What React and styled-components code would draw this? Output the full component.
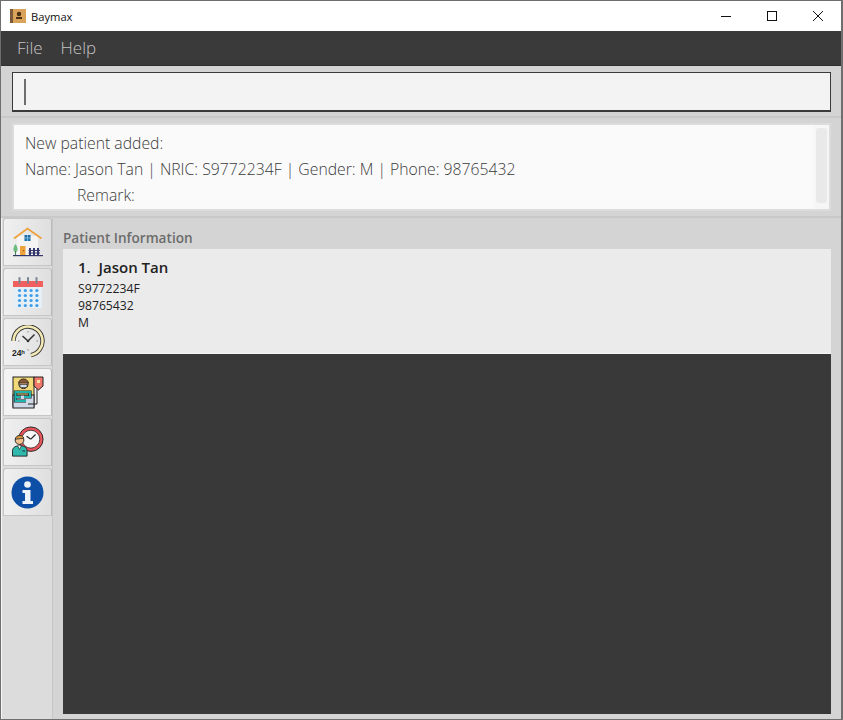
import React from 'react';
import styled, { createGlobalStyle } from 'styled-components';

const GlobalStyle = createGlobalStyle`
    html, body {
        margin: 0;
        padding: 0;
        height: 100%;
        overflow: hidden;
    }
    #root {
        height: 100%;
    }
`;

function BaymaxLogo () {
    return (
        <svg width="16" height="16" viewBox="0 0 16 16">
            <rect x="0" y="1" width="4" height="14" fill="#7a5a3a" />
            <rect x="3" y="1" width="13" height="14" fill="#d9a35c" />
            <circle cx="9" cy="6" r="2.2" fill="#4a2f14" />
            <rect x="6" y="9" width="6" height="2" fill="#4a2f14" />
        </svg>
    );
}

function HomeIcon () {
    return (
        <svg width="30" height="30" viewBox="0 0 30 30">
            <rect x="4" y="9" width="21" height="19" fill="#f4f4f4" />
            <path d="M1 11.5 L14.5 1.5 L28.5 11.5" fill="none" stroke="#eda23c" strokeWidth="1.8" />
            <rect x="11.5" y="8" width="6" height="6" fill="#1f6fa8" />
            <path d="M14.5 8 V14 M11.5 11 H17.5" stroke="#8fc5e8" strokeWidth="0.8" />
            <rect x="7" y="19" width="5.5" height="9" fill="#eda23c" />
            <rect x="10" y="23" width="1.2" height="1.2" fill="#9a5d14" />
            <path d="M2.5 17 C0 20 -0.5 25 2.5 25 C5.5 25 5 20 2.5 17 Z" fill="#6dbb7c" />
            <rect x="2" y="24" width="1" height="4" fill="#4b7f58" />
            <path d="M17 21 V28 M21 21 V28 M25 21 V28" stroke="#33376b" strokeWidth="2" />
            <path d="M15.5 23.5 H27 M15.5 26 H27" stroke="#33376b" strokeWidth="1" />
            <rect x="0" y="28" width="30" height="1.2" fill="#33376b" />
        </svg>
    );
}

function CalendarIcon () {
    const dots = [];
    for (let row = 0; row < 4; row++) {
        for (let col = 0; col < 4; col++) {
            dots.push(<circle key={`${row}-${col}`} cx={6.5 + col * 5.8} cy={13.5 + row * 5} r="1.6" fill="#3d9de8" />);
        }
    }
    return (
        <svg width="30" height="31" viewBox="0 0 30 31">
            <rect x="1" y="9" width="28" height="22" fill="#e6eff6" />
            <rect x="0" y="4" width="30" height="6" fill="#f0605f" />
            <path d="M6.5 1 V6 M15 1 V6 M23.5 1 V6" stroke="#7d8590" strokeWidth="2" strokeLinecap="round" />
            {dots}
        </svg>
    );
}

function ClockIcon () {
    const arc = 'M2.5 16 A14.5 14.5 0 1 1 20 30.2';
    return (
        <svg width="34" height="34" viewBox="0 0 34 34">
            <path d={arc} fill="none" stroke="#333333" strokeWidth="4.4" />
            <path d={arc} fill="none" stroke="#f3e9b5" strokeWidth="2.6" />
            <path d="M17 16 L11.5 11 M17 16 L23.5 9.5" stroke="#333" strokeWidth="1.5" fill="none" />
            <circle cx="17" cy="16" r="1.3" fill="#333" />
            <path d="M17 6 V7.5 M27 16 H25.5 M17 25.5 V24 M7 16 H8.5" stroke="#8a8a8a" strokeWidth="1" />
            <text x="1" y="31" fontFamily="'Liberation Sans', sans-serif" fontSize="8.5" fontWeight="700" fill="#222">24ʰ</text>
        </svg>
    );
}

function BedIcon () {
    return (
        <svg width="33" height="33" viewBox="0 0 33 33">
            <rect x="2" y="1" width="21" height="30" fill="#f2d977" stroke="#222" strokeWidth="1" />
            <rect x="2" y="19" width="21" height="13" fill="#cfd8e6" stroke="#222" strokeWidth="1" />
            <circle cx="12.5" cy="8" r="4.6" fill="#e9b48e" stroke="#222" strokeWidth="1" />
            <path d="M7.5 7 C8.5 1.5 16.5 1.5 17.5 7 Z" fill="#8a5a34" stroke="#222" strokeWidth="0.7" />
            <rect x="9" y="8.5" width="7" height="3" fill="#cfe0e6" stroke="#222" strokeWidth="0.6" />
            <path d="M4.5 21 V16 H19 V21 H13 M4.5 21 H10 M4.5 21 V25 H15" fill="none" stroke="#222" strokeWidth="3.2" />
            <path d="M4.5 21 V16 H19 V21 H13 M4.5 21 H10 M4.5 21 V25 H15" fill="none" stroke="#1fb3ad" strokeWidth="2" />
            <path d="M17 28 H26 V13" fill="none" stroke="#222" strokeWidth="1" />
            <path d="M23 1 H32 V10 L27.5 14 L23 10 Z" fill="#f0796b" stroke="#222" strokeWidth="1" />
            <rect x="26" y="4" width="3" height="3" fill="#f8e2a0" />
        </svg>
    );
}

function DoctorClockIcon () {
    return (
        <svg width="32" height="32" viewBox="0 0 34 34">
            <circle cx="20" cy="14" r="13" fill="#e8545b" stroke="#222" strokeWidth="1" />
            <circle cx="20" cy="14" r="9.5" fill="#f7f7f7" stroke="#222" strokeWidth="0.8" />
            <path d="M20 14 L15.5 11 M20 14 L25 9" stroke="#222" strokeWidth="1.3" />
            <circle cx="8" cy="15" r="4.6" fill="#f2c08f" stroke="#222" strokeWidth="1" />
            <path d="M3.5 14 C4 9 12 9 12.5 13 Z" fill="#d69b3c" stroke="#222" strokeWidth="0.8" />
            <path d="M0.5 32 V26 C1 22 5 21 8 21 C12 21 15.5 22 16 26 V32 Z" fill="#2fb9ae" stroke="#222" strokeWidth="1" />
            <path d="M6 21 L8 25 L10 21" fill="#f6f6f6" stroke="#222" strokeWidth="0.7" />
            <rect x="11" y="26" width="3" height="1" fill="#222" />
        </svg>
    );
}

function InfoIcon () {
    return (
        <svg width="33" height="33" viewBox="0 0 33 33">
            <circle cx="16.5" cy="16.5" r="16" fill="#0d4ea6" />
            <circle cx="16.5" cy="8.5" r="3.3" fill="#eef3fa" />
            <path d="M11.5 14 H19.5 V25 H22 V28 H11.5 V25 H14 V17 H11.5 Z" fill="#eef3fa" />
        </svg>
    );
}

const tabs = [
    { id: 'home', icon: <HomeIcon /> },
    { id: 'calendar', icon: <CalendarIcon /> },
    { id: 'clock', icon: <ClockIcon /> },
    { id: 'patient', icon: <BedIcon />, selected: true },
    { id: 'doctor', icon: <DoctorClockIcon /> },
    { id: 'info', icon: <InfoIcon /> },
];

function App () {
    return (
        <Window>
            <GlobalStyle />
            <TitleBar>
                <BaymaxLogo />
                <WindowTitle>Baymax</WindowTitle>
                <WindowControls>
                    <ControlButton>
                        <svg width="12" height="12" viewBox="0 0 12 12"><path d="M1 6.5 H11" stroke="#111" /></svg>
                    </ControlButton>
                    <ControlButton>
                        <svg width="12" height="12" viewBox="0 0 12 12"><rect x="1.5" y="1.5" width="9" height="9" fill="none" stroke="#111" /></svg>
                    </ControlButton>
                    <ControlButton>
                        <svg width="12" height="12" viewBox="0 0 12 12"><path d="M1 1 L11 11 M11 1 L1 11" stroke="#111" /></svg>
                    </ControlButton>
                </WindowControls>
            </TitleBar>
            <MenuBar>
                <MenuItem>File</MenuItem>
                <MenuItem>Help</MenuItem>
            </MenuBar>
            <CommandPane>
                <CommandBox>
                    <Caret />
                </CommandBox>
            </CommandPane>
            <ResultPane>
                <ResultBox>
                    <ResultText>
                        <ResultLine>New patient added:</ResultLine>
                        <ResultLine>Name: Jason Tan | NRIC: S9772234F | Gender: M | Phone: 98765432</ResultLine>
                        <ResultLine $indent>Remark:</ResultLine>
                    </ResultText>
                    <ScrollTrack>
                        <ScrollThumb />
                    </ScrollTrack>
                </ResultBox>
            </ResultPane>
            <MainArea>
                <TabColumn>
                    {tabs.map(tab => (
                        <Tab key={tab.id} $selected={tab.selected}>{tab.icon}</Tab>
                    ))}
                </TabColumn>
                <ContentPane>
                    <SectionTitle>Patient Information</SectionTitle>
                    <PatientList>
                        <PatientCard>
                            <PatientName>1.&nbsp; Jason Tan</PatientName>
                            <PatientField>S9772234F</PatientField>
                            <PatientField>98765432</PatientField>
                            <PatientField>M</PatientField>
                        </PatientCard>
                    </PatientList>
                </ContentPane>
            </MainArea>
        </Window>
    );
}

const uiFont = `'Open Sans', 'Noto Sans', sans-serif`;

const Window = styled.div`
    width: 843px;
    height: 720px;
    box-sizing: border-box;
    border: 1px solid #6f6f6f;
    border-right-width: 2px;
    display: flex;
    flex-direction: column;
    background: #d4d4d4;
    font-family: ${uiFont};
    overflow: hidden;
`;

const TitleBar = styled.div`
    height: 30px;
    flex: none;
    background: #ffffff;
    display: flex;
    align-items: center;
    padding-left: 9px;
`;

const WindowTitle = styled.span`
    margin-left: 5px;
    font-size: 11.2px;
    color: #111111;
`;

const WindowControls = styled.div`
    margin-left: auto;
    display: flex;
`;

const ControlButton = styled.div`
    width: 46px;
    height: 30px;
    display: flex;
    align-items: center;
    justify-content: center;
`;

const MenuBar = styled.div`
    height: 35px;
    flex: none;
    box-sizing: border-box;
    background: #3a3a3a;
    border-bottom: 1px solid #2f2f2f;
    display: flex;
    align-items: center;
    padding: 0 0 2px 16px;
    gap: 18px;
`;

const MenuItem = styled.span`
    font-size: 17px;
    font-weight: 300;
    color: #c4c4c4;
`;

const CommandPane = styled.div`
    height: 52px;
    flex: none;
    box-sizing: border-box;
    padding: 6px 10px 4px 11px;
    border-bottom: 2px solid #c9c9c9;
`;

const CommandBox = styled.div`
    height: 40px;
    box-sizing: border-box;
    background: #f3f3f3;
    border: 1px solid #3a3a3a;
    border-bottom-width: 2px;
    display: flex;
    align-items: center;
    padding-left: 11px;
`;

const Caret = styled.div`
    width: 2px;
    height: 26px;
    background: #6e6e6e;
`;

const ResultPane = styled.div`
    height: 100px;
    flex: none;
    box-sizing: border-box;
    padding: 5px 10px 5px 11px;
    border-bottom: 2px solid #c9c9c9;
`;

const ResultBox = styled.div`
    height: 88px;
    box-sizing: border-box;
    background: #fafafa;
    border: 2px solid #dcdcdc;
    display: flex;
`;

const ResultText = styled.div`
    flex: 1;
    padding: 5px 0 0 11px;
`;

const ResultLine = styled.div`
    height: 26px;
    line-height: 26px;
    font-size: 15.75px;
    font-weight: 300;
    color: #3a3a3a;
    white-space: nowrap;
    padding-left: ${props => props.$indent ? '52px' : '0'};
`;

const ScrollTrack = styled.div`
    width: 16px;
    background: #f6f6f6;
    padding: 3px 2px 6px 3px;
    box-sizing: border-box;
`;

const ScrollThumb = styled.div`
    height: 100%;
    border-radius: 3px;
    background: #e9e9e9;
`;

const MainArea = styled.div`
    flex: 1;
    display: flex;
    min-height: 0;
`;

const TabColumn = styled.div`
    width: 52px;
    flex: none;
    box-sizing: border-box;
    padding-left: 1px;
    background: #dcdcdc;
    border-left: 1px solid #f5f5f5;
    border-right: 1px solid #c6c6c6;
    display: flex;
    flex-direction: column;
`;

const Tab = styled.div`
    height: 48px;
    width: 49px;
    flex: none;
    box-sizing: border-box;
    margin-bottom: 2px;
    display: flex;
    align-items: center;
    justify-content: center;
    border: 1px solid #c6c6c6;
    border-right-color: #b9b9b9;
    border-radius: 3px 3px 0 0;
    background: ${props => props.$selected ? '#f3f3f3' : 'linear-gradient(90deg, #f0f0f0, #dfdfdf)'};
`;

const ContentPane = styled.div`
    flex: 1;
    min-width: 0;
    display: flex;
    flex-direction: column;
    padding: 12px 10px 5px 10px;
`;

const SectionTitle = styled.div`
    height: 19px;
    line-height: 16px;
    font-size: 13.6px;
    font-weight: 600;
    color: #6c6c6c;
`;

const PatientList = styled.div`
    flex: 1;
    background: #393939;
`;

const PatientCard = styled.div`
    height: 105px;
    box-sizing: border-box;
    padding: 8px 0 0 15px;
    background: #ebebeb;
    border-bottom: 1px solid #f5f5f5;
`;

const PatientName = styled.div`
    height: 23px;
    line-height: 20px;
    font-size: 15px;
    font-weight: 600;
    color: #222222;
`;

const PatientField = styled.div`
    height: 17px;
    line-height: 17px;
    font-size: 12.2px;
    color: #222222;
`;

export default App;
